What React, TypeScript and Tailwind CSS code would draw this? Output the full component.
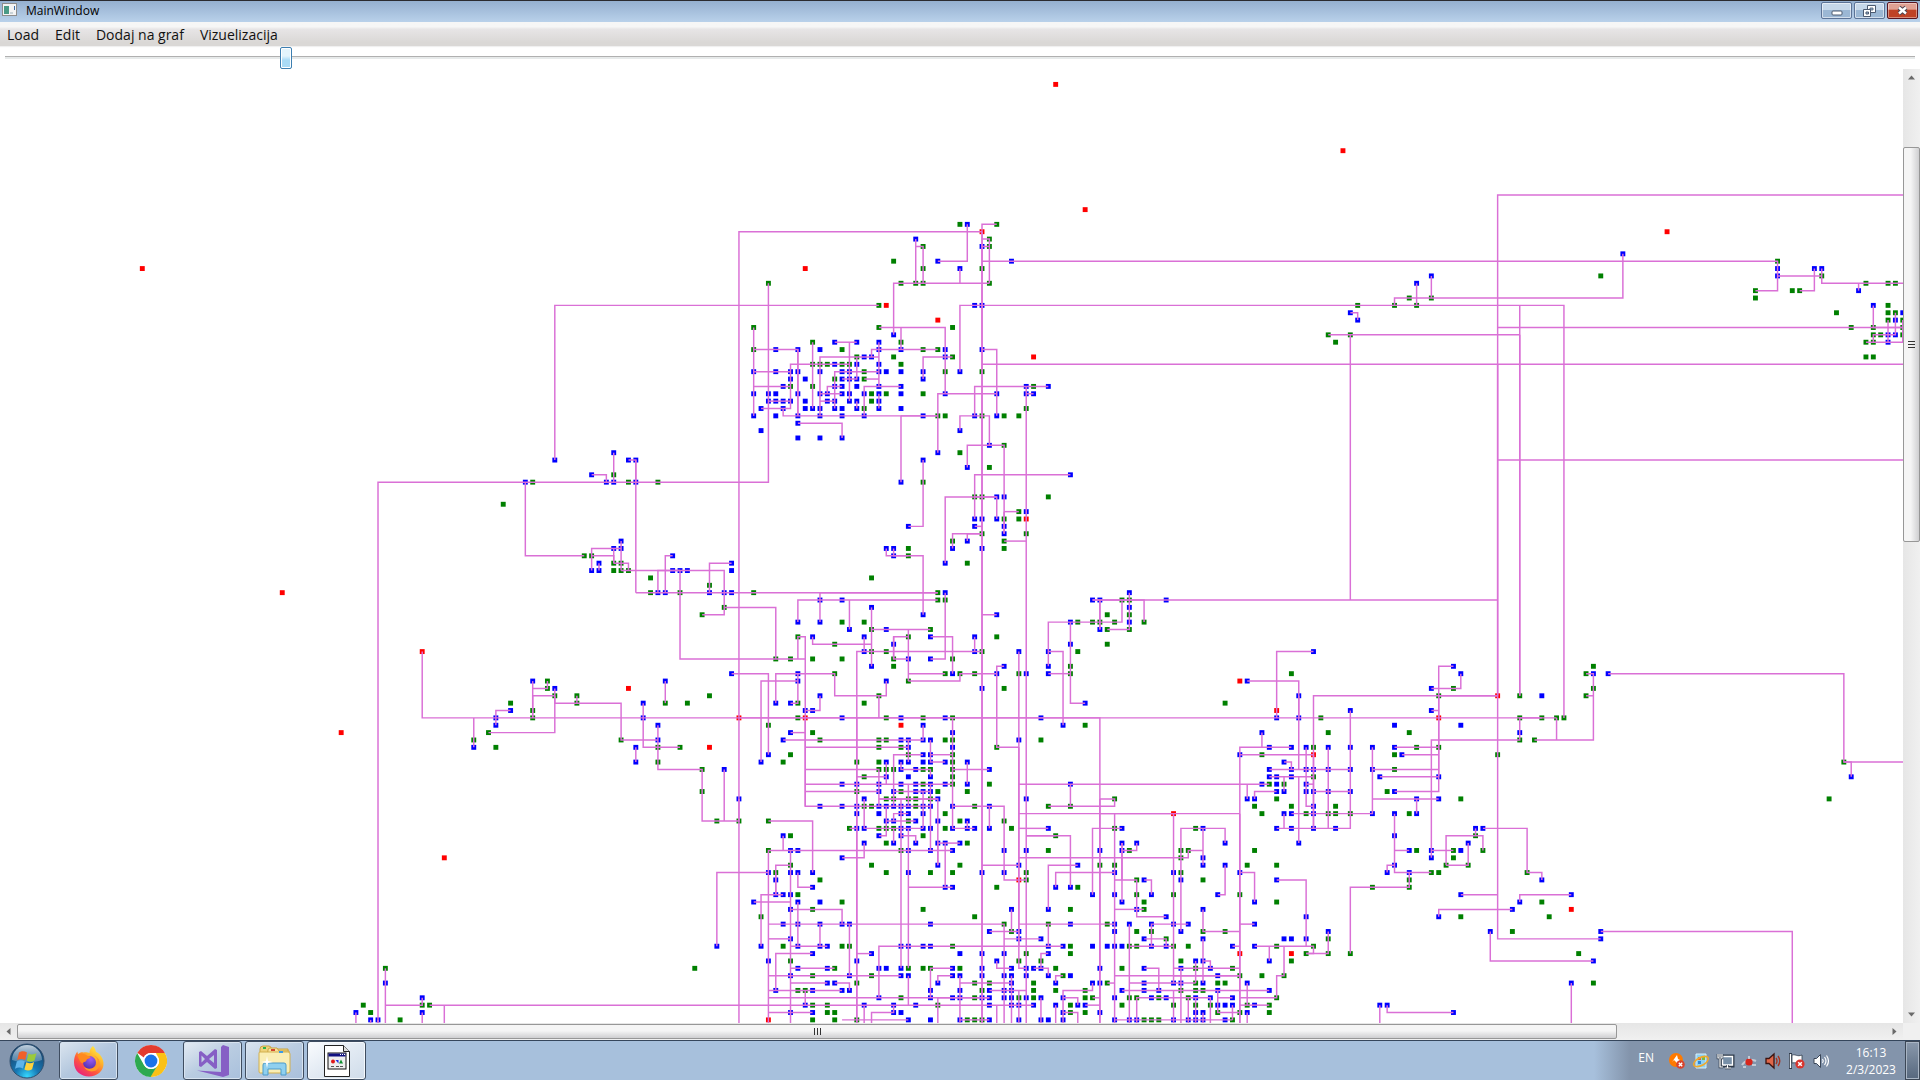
import React from "react";

/* ---------- network data: grid cells, b = switch, g = node, r = substation ---------- */

const NODE_ROWS = `
0 r124
9 r163
17 r128
19 g111 b112 g116
20 r114 r207
21 b105 g115
22 g106 b114 g115
23 b201
24 g102 b108 b118 g222
25 r0 r90 g106 b111 g114 b222 b227 b228
26 b175 g198 b222 g228
27 g85 g103 g105 g106 g115 b173 g234 g237 g238
28 g219 g224 g225 b233
29 g172 g175 g219
30 g100 r101 b113 b114 g165 g170 g173 b235 g237
31 b164 g230 g237 g238 b239
32 r108 b165 g237 b238 g239
33 g83 g100 g110 g232 g235 g239
34 b102 g161 g164 g235 g236 b237 b238 g239
35 g91 b94 b97 b100 g103 g162 g234 g235 b237
36 g83 b86 b89 b92 g95 b100 b103 g106 g108 b109 b114
37 g97 b98 b99 g102 b109 g110 r121 g234 g235
38 g91 g92 g93 b94 g95 g96 b97 b100 g103
39 b83 b86 b88 b89 b92 b95 b96 g98 b100 b101 b103 b106 g109 b111 g114
40 b88 b90 g94 b95 b96 b97 g98 b106
41 b87 g88 g91 b94 b95 b97 b100 b103 b120 g121 b123
42 b83 b85 b86 b89 b92 b93 b95 b96 b98 g99 b100 g101 b103 g106 b109 b116 b120 b121
43 b85 b86 b87 b88 b90 b93 b94 b96 b97 g99 b100
44 b84 b87 b90 b91 b92 b94 b95 b97 g98 b100 b103 g120
45 b83 b86 b89 b92 b95 b98 b106 g108 g109 b113 g114 b116 g117 g119
46 b89
47 b84 b111
48 b89 b92 b95
49 b115 g117
50 b64 b108 g111
51 b56 b66 b67 b106
52 b112 g115
53 b61 g64 b126
54 b52 g53 b63 b64 g66 b67 g70 b103 g106
56 g113 g114 b116 b117 g123
57 g49
58 g119 b120
59 b113 b114 b116 g117 g119 r120
60 b104 b113 b117
61 g114 b117 g120
62 b65 g110 b112 g117
63 b64 b65 b101 b102 g104 b110 b114 g117
64 g60 g61 b72 b102 g104
65 b62 g64 g65 b80 b109 g112
66 b61 b62 g64 g65 g66 b72 b73 b74 b80
67 g69 g99
68 g77
69 r19 g69 b70 b71 g73 b77 b79 b80 g83 g108 b109 b134
70 b92 b95 g108 g109 b129 b130 g133 g134 b139
71 g79 b99 b134
72 g76 b106 b116 g131 g134
73 b89 b92 g95 g98 b126 g127 g129 g130 g132 b134 g136
74 b96 g99 b101 g107 b130 g131 g134
75 g89 b91 b98 g104 b107 b113 g116
76 g94 b102 b126 g131
77 r38 b98 g99 g101 b113 g114 b119 b123 g127 b159
78 g86 g88 g91 g95 g102 b104 b107 g110
79 b99 g102 b117 b123 g126 b178 g197
80 b80 b89 g94 g109 b110 g111 g113 b116 g119 b120 b123 g126 g156 b179 g196 b197 b199
81 b53 g55 b71 b89 b101 g104 r149 b150
82 g55 b56 r66 b114 g117 b175 g178 g197
83 g56 g59 g77 b92 g100 b157 g176 r184 g187 b190 g196
84 g50 g59 b68 g71 g74 b86 b88 g89 g98 b128 g147
85 b50 g53 b90 b91 r154 b164 b175
86 b48 g53 b68 r81 g89 r90 b95 g101 b103 g106 b109 g110 b122 b154 b157 g160 r176 g187 g190 g192 g193
87 b48 b70 g85 r103 b106 b125 g128 b170 b179
88 r27 g47 b88 g91 b110 b152 g161 g172 b187
89 g45 g65 b70 b87 g92 g100 g101 b103 b104 b106 b107 g109 g110 b119 g122 g187 g189
90 b45 g48 b67 g70 g73 r77 g100 g103 b104 b110 g116 b153 b156 b158 g159 b161 b164 b167 b170 g173 g176
91 b85 g88 g104 b106 b107 g110 b149 g152 r159 g170 b171 g184
92 b67 g70 b84 g87 g97 g100 b101 b103 b104 b106 b107 b109 g110 b112 b155 g231
93 g76 b79 g100 g101 g102 b103 b105 g106 g107 g110 b115 b153 b156 b158 b159 b161 b164 b167 g170
94 g98 b101 b104 b107 g110 b153 b154 b156 g159 b168 b176 b232
95 b95 b97 b100 b103 b105 g106 b107 b109 g110 b112 g115 b126 b152 g153 b154 g155 b158
96 g76 g97 b100 b102 g103 b105 b106 b107 g108 g112 b154 b155 b158 b159 b161 b164 g169 b170
97 b81 b98 g101 g102 g104 g105 g107 b108 b120 g132 b150 b151 g154 b173 b176 g179 g229
98 b92 b95 b97 g98 g99 b100 b101 b102 b103 b104 g105 b106 b107 b110 g113 b115 g123 g126 g151 g156 b159 g162
99 b97 b100 b103 b104 b106 g109 r140 g152 b155 b156 g158 b159 g161 g162 g164 b167 b170 g172 b173
100 g78 g81 g85 b101 b102 g104 b105 b108 g111 b112 g117
101 g96 b97 b98 g100 g101 g102 b103 b104 b106 b107 g109 b110 b112 b113 b115 g118 b123 g132 b133 g143 b144 b154 b156 b159 b162 b181 b182
102 b87 g88 b100 b103 g106 g124 b170 g181
103 b98 g101 b102 b105 b108 b109 b111 g112 b133 b135 b147 b157 b180
104 g85 b88 b89 g103 b104 b107 b110 b117 b120 g123 b130 b133 g134 g141 g142 g151 b172 g173 b175 g178 b179 g182
105 r41 b95 g141 b144 b175 g178
106 g88 g99 b108 g111 b119 b127 g130 g132 b144 b147 g150 g154 b170 g177 g180
107 b85 g86 b88 b89 b91 g101 b104 g107 g110 b114 b117 g120 b132 b140 g141 b149 b169 b172 g175 g176 g188
108 b86 g92 r119 g120 g135 b136 b141 g144 b154 g172 b190
109 b91 b109 b110 g116 b124 b126 g127 g167 g172
110 b86 b87 b88 g89 b129 b132 g135 b137 g140 b146 g149 b179 b194
111 b83 b89 b92 g95 b133 g136 b151 g154 b187 g190
112 b88 g91 g106 b118 b123 g126 b135 g136 b144 b186 r194
113 g84 g113 b139 b158 b176 g179 g191
114 b87 b89 b92 b95 b96 b107 g117 g123 b126 g131 b132 b134 b137 b140 b142 b151
115 b115 g118 b119 b132 g135 g137 b141 g144 g147 b161 b183 g186 b198
116 b88 b119 b122 b136 g139 b144 b155 b156 b158 g161 b198
117 b78 b84 g87 b89 b92 b93 g95 g96 b103 b104 b106 b107 g110 b123 b125 g126 b129 b131 b132 b133 g134 g135 b137 b139 g140 g142 b148 b151 g154 g159
118 b91 b99 b111 b114 b117 g120 b123 g126 r149 r156 g158 g161 g164 g195
119 b85 g88 b97 b116 g119 g122 g141 b143 b144 b153 g156 b197
120 g33 g75 b89 b93 g94 b100 b101 b103 g104 g106 g107 b110 g111 b114 b118 b120 b121 b122 g124 b130 g133 b136 b141 g143 b145 g148
121 b88 g91 b96 g99 b103 b104 b110 b111 b114 b117 b118 b120 b123 g125 b126 b146 g149 g152 g155
122 b33 b93 b94 g97 b108 g113 g115 b118 g121 b124 b129 b130 g131 b136 b140 b141 g143 b144 g146 g147 b150 b194 g197
123 b86 g89 g90 b91 b95 b96 b107 b111 g114 b115 b117 b118 g121 g124 g128 b133 b136 b138 g141 g143 g144 b146 b153
124 b38 b100 g103 b107 b110 b111 g113 b114 b115 b117 b118 g119 b120 g121 b122 b125 g128 g129 b132 g134 g135 b137 g138 b139 g142 b143 b145 b148 g154
125 g30 g38 g39 b90 g91 g93 b98 b102 b105 g108 b115 b118 b119 b121 b124 g126 b127 b128 g133 g140 g143 g145 b146 b147 b148 g150 b151 g153 b168 b169
126 b29 g31 b38 b88 b91 g93 g94 b102 b103 b125 g126 g128 b130 b143 b144 g146 g149 b150 g153 b178
127 b31 b32 g35 r85 g91 g94 g97 b104 b107 b111 g112 g113 g114 b115 b119 b122 b123 b125 b132 b134 b135 g136 g137 g138 b140 b142 b143 b144 b147 g148
`;

/* Each line is a polyline through "column,row" cells. */
const LINES = `
81,128 81,20 114,20|114,20 114,128|114,20 114,128|116,19 114,19 114,20|114,21 115,21 115,27|114,22 115,22
105,21 105,27|105,22 106,22 106,27|102,34 102,27 115,27|111,25 111,27|108,24 112,24 112,19|114,24 222,24 222,28 219,28
85,27 85,54 32,54 32,128|56,51 56,30 100,30|111,39 111,30 193,30 193,86|100,33 109,33 109,42|103,33 103,36
83,33 83,45|83,36 89,36 89,45|89,36 89,45|83,39 88,39|83,41 88,41|96,38 88,38 88,44 84,44|85,43 88,43
91,35 91,44|94,35 97,35|96,35 96,43|100,37 92,37 92,45|92,43 94,43|97,37 97,40 95,40|97,43 97,44
99,37 99,36 108,36|100,35 100,41|100,42 100,44|100,39 94,39 94,44|98,40 100,40|92,42 95,42|93,42 93,41 95,41
98,45 98,41 103,41|87,44 87,45 108,45|103,45 103,54|103,45 108,45|89,46 95,46 95,48|106,40 106,37 110,37
108,50 108,42 116,42|114,36 116,36 116,45|114,38 240,38|113,45 113,41 123,41|120,41 120,128|120,42 121,42
111,47 111,45 115,45 115,49|112,52 112,49 117,49 117,61|126,53 113,53 113,59|106,51 106,60 104,60
240,15 184,15 184,116 198,116|184,38 184,83|201,23 201,29 170,29 170,30|175,26 175,29|173,27 173,30|187,30 187,83|187,34 187,83
164,31 165,31 165,32|161,34 187,34|184,33 240,33|225,28 227,28 227,25|222,26 228,26|228,25 228,27 240,27|233,27 233,28
235,30 235,33 239,33|237,32 237,35|238,31 238,34 235,34 235,35|234,35 239,35 239,32|164,34 164,70|184,51 240,51
109,65 109,56 116,56 116,59|113,56 116,56|113,60 114,60|117,58 119,58|117,58 117,61|110,63 110,61 114,61|112,62 112,61 114,61
117,62 120,62|101,63 101,64 106,64 106,72|102,63 102,64 104,64|67,69 108,69|89,73 89,70 108,70|92,73 92,69 108,69
96,74 96,70|109,69 109,78 107,78|99,71 99,79|99,74 107,74|104,74 104,81|102,78 102,75 104,75|102,75 102,78 104,78
89,78 89,75 90,75 90,98|91,75 91,76 99,76|98,75 98,77|97,128 97,77 114,77|97,86 97,128|107,75 110,75 110,80|113,75 113,77
114,72 116,72|104,80 109,80|104,81 111,81 111,80 116,80|116,80 116,79 117,79|116,80 116,90 119,90|86,84 86,80 94,80 94,83 101,83 101,81
84,92 84,81 89,81|89,80 89,84 88,84|100,83 100,86|90,85 92,85 92,83|119,77 119,120 120,120|119,90 119,117
123,79 123,73 133,73 133,70|126,73 126,84 128,84|123,77 125,77 125,87|123,80 126,80|129,70 184,70|130,70 130,74|130,70 130,74
134,69 134,74 131,74|129,70 136,70 136,73|52,54 52,64 60,64|61,53 63,53 63,54|64,50 64,54|66,51 67,51 67,69|67,51 67,54
61,66 61,63 65,63|61,64 64,64 64,65|65,62 65,66|64,63 64,65|64,65 66,65 66,66|62,65 62,66|65,66 79,66 79,72 76,72
70,69 70,66 73,66|71,69 71,64 72,64|73,66 73,78 90,78|77,69 77,65 80,65|79,71 86,71 86,78|53,81 53,86|53,82 55,82 55,81
56,82 56,88 47,88|53,86 53,83 56,83|56,83 56,84 65,84 65,89 70,89|59,83 59,84|48,87 48,85 50,85|45,90 45,86|38,77 38,86 192,86
81,86 130,86 130,128|68,84 68,90 73,90|70,87 70,93 76,93 76,100 81,100 81,97|79,93 79,100|71,81 71,84|67,90 67,92|80,80 85,80 85,91
85,100 91,100 91,107|33,120 33,128|33,125 38,125 38,124|39,125 121,125|41,125 41,128|38,126 38,128|29,126 29,128|31,127 31,128|32,127 32,128
78,117 78,107 85,107|90,86 90,98 107,98|88,88 90,88|87,89 106,89 106,87|90,90 104,90|104,89 104,92|102,98 102,91 106,91
107,89 107,92 109,92|107,91 110,91|110,86 110,95|90,93 100,93 100,98|97,94 101,94|101,92 101,95|103,92 103,93 107,93 107,94
110,93 115,93|112,92 112,95|90,95 110,95|90,96 100,96|102,96 107,96|100,97 108,97 108,106|100,97 108,97|107,95 107,104
106,96 106,101|104,95 104,98|105,96 106,96|103,97 103,120|98,97 98,101 106,101|102,100 102,99 104,99|101,100 105,100|101,98 101,102 100,102
96,101 97,101|102,101 102,103|103,102 105,102 105,103|103,101 103,102|104,101 104,120|110,95 110,101 113,101|112,100 112,101
110,98 117,98 117,108 120,108|115,98 115,101|108,103 111,103|108,103 108,106|109,103 109,109|104,109 110,109|110,104 85,104 85,128|87,102 87,104|88,104 88,128
98,103 98,105 95,105|86,110 86,106 88,106|86,107 86,110|84,117 84,110 87,110|89,107 89,109 91,109|83,111 88,111|88,112 95,112 95,114
85,114 117,114 117,128|89,111 89,117|92,114 92,117|88,117 93,117|85,116 88,116|96,114 96,121|86,123 86,118 91,118|97,118 99,118
88,120 94,120|85,121 103,121|88,122 93,122|94,122 96,122 96,123|85,123 95,123|90,123 90,125|85,124 115,124|108,128 108,124 115,124|85,126 91,126
100,124 100,117 125,117|104,121 104,125|99,128 99,126 102,126 102,125|98,125 98,128|95,127 104,127|107,124 107,120 110,120
108,122 108,121 110,121|111,121 111,128|111,122 118,122|114,106 119,106|115,115 119,115|118,112 118,115|117,116 122,116|116,119 116,120 118,120
118,121 118,128|115,123 120,123|116,125 116,128|119,95 153,95|119,99 149,99|130,99 140,99|119,101 123,101|120,102 126,102 126,109|120,102 124,102
119,105 142,105 142,104 144,104|119,114 132,114|119,123 119,128|111,127 115,127|130,97 132,97 132,98 123,98|126,95 126,98|130,97 130,128
129,110 129,101 133,101|132,99 132,128|133,103 133,111|133,103 133,108|133,104 135,104 135,103|123,112 123,106 127,106|124,109 124,107 132,107
132,108 135,108 135,113 139,113|136,108 137,108 137,110|132,112 136,112|140,99 140,122|141,115 141,101 147,101 147,103|144,101 144,106
146,110 147,110 147,106|149,128 149,90 156,90|149,91 159,91|149,99 149,128|152,88 152,90|149,107 151,107 151,111|144,112 144,115 149,115
144,116 144,122|134,114 134,128|137,117 137,114 142,114|136,116 139,116 139,117|134,117 140,117|148,117 149,117|149,114 151,114
123,114 123,117|122,120 122,118 123,118|121,120 123,120 123,121|124,122 124,121 125,121|136,120 138,120 138,123|140,120 149,120
143,122 143,119|144,119 145,119 145,120|132,121 149,121|140,121 149,121|134,122 143,122|133,123 153,123|135,128 135,124 145,124 145,128
140,123 140,128|141,120 141,128|131,122 132,122|125,128 125,123 129,123 129,122|125,124 127,124 127,125|124,125 124,128|122,124 122,128
128,125 130,125|129,124 130,124|125,126 127,126 127,128|142,124 142,128|143,124 143,128|144,126 144,128|146,123 146,126 149,126
146,124 148,124|148,125 148,127|132,127 148,127|150,122 150,125|149,125 153,125|149,124 154,124 154,121 155,121 155,117|150,126 150,128
151,117 159,117 159,118 158,118|153,117 153,119|154,108 158,108 158,117|154,86 154,77 159,77|150,81 157,81 157,93|157,83 157,86
159,101 159,83 184,83|176,83 184,83|159,91 159,101|175,82 179,82 179,80|178,79 176,79 176,96 170,96|176,83 176,94|175,85 176,85|164,85 164,101 154,101
161,90 161,101|158,90 158,98 159,98|158,95 159,95|153,93 164,93|153,94 159,94|157,94 157,103|155,94 155,96|156,93 156,92 155,92
150,95 150,97|151,97 151,96 154,96|159,96 164,96|156,99 167,99 167,90|155,99 155,101|167,93 176,93|168,94 176,94|170,90 176,90
171,91 176,91|167,97 176,97|173,97 173,99|175,105 175,89 187,89 187,86|187,86 190,86|189,89 197,89 197,80 196,80|192,86 192,89|196,83 197,83
170,99 170,107 175,107|170,104 172,104|169,107 169,106 170,106|172,107 172,109 164,109 164,118|175,104 178,104|177,106 177,102 182,102 182,104
181,101 181,102|177,106 180,106 180,103|182,101 188,101 188,107 190,107 190,108|179,110 184,110|187,111 187,110 194,110
176,113 176,112 186,112|183,115 183,119 197,119|198,115 224,115 224,128|158,118 161,118 161,115|194,122 194,128|168,125 168,128
169,125 169,126 178,126|199,80 231,80 231,92 240,92|231,92 232,92 232,94
`;

const STEP = 7.366;
const SIZE = 4.9;
const cx = (c: number) => 142.3 + c * STEP;
const cy = (r: number) => 15.4 + r * STEP;

const FILL: Record<string, string> = { b: "#0000ff", g: "#008000", r: "#ff0000" };

const nodes = NODE_ROWS.trim()
  .split("\n")
  .flatMap((line) => {
    const [row, ...cells] = line.split(" ");
    return cells.map((cell) => ({ row: Number(row), col: Number(cell.slice(1)), kind: cell[0] }));
  });

const lines = LINES.trim()
  .split(/[|\n]/)
  .map((line) =>
    line
      .split(" ")
      .map((p) => {
        const [c, r] = p.split(",").map(Number);
        return `${cx(c).toFixed(2)},${cy(r).toFixed(2)}`;
      })
      .join(" ")
  );

function NetworkCanvas() {
  return (
    <svg className="block h-full w-full" role="img" aria-label="Network graph">
      {nodes.map((n, i) => (
        <rect key={i} x={cx(n.col) - SIZE / 2} y={cy(n.row) - SIZE / 2} width={SIZE} height={SIZE} fill={FILL[n.kind]} />
      ))}
      <g fill="none" stroke="#da70d6" strokeWidth="1.47">
        {lines.map((points, i) => (
          <polyline key={i} points={points} />
        ))}
      </g>
    </svg>
  );
}

/* ---------- window chrome ---------- */

const captionButton =
  "flex h-[17px] w-[31px] items-center justify-center rounded-[2px] border border-[#5c7396] bg-linear-to-b from-[#c6d8ea] from-45% to-[#9bb7d4] to-50% shadow-[inset_0_0_0_1px_rgba(255,255,255,0.55)]";

function TitleBar() {
  return (
    <header className="flex h-[22px] items-start border-t border-[#2b2b30] bg-linear-to-b from-[#95b0d0] to-[#b9d1ea] pr-[2px] pl-[2px]">
      <svg width="15" height="13" viewBox="0 0 15 13" className="mt-[2px]" aria-hidden="true">
        <rect x="0.5" y="0.5" width="14" height="12" fill="#f4f4f4" stroke="#8d8d8d" />
        <rect x="2" y="3" width="5" height="8" fill="#4a9a86" />
        <path d="M8 9h3v2H8z" fill="#c9d3d8" />
        <path d="M12 3h1v4h-1z" fill="#3f6fa8" />
      </svg>
      <h1 className="ml-[9px] font-['Open_Sans',sans-serif] text-[12px] leading-[20px] text-black">MainWindow</h1>
      <div className="mt-px ml-auto flex gap-[2px]">
        <button type="button" aria-label="Minimize" className={captionButton}>
          <svg width="12" height="6" viewBox="0 0 12 6" className="mt-[4px]">
            <rect x="1" y="1" width="10" height="4" rx="1" fill="#fff" stroke="#4c5a70" />
          </svg>
        </button>
        <button type="button" aria-label="Restore" className={captionButton}>
          <svg width="13" height="12" viewBox="0 0 13 12">
            <path d="M4.5.5h8v7h-8z" fill="#fff" stroke="#4c5a70" />
            <path d="M7 3h3v2H7z" fill="#9bb7d4" stroke="#4c5a70" strokeWidth=".8" />
            <path d="M.5 4.500h7v7h-7z" fill="#fff" stroke="#4c5a70" />
            <path d="M3 7h2.500v2H3z" fill="#9bb7d4" stroke="#4c5a70" />
          </svg>
        </button>
        <button
          type="button"
          aria-label="Close"
          className="flex h-[17px] w-[31px] items-center justify-center rounded-[2px] border border-[#5a1520] bg-linear-to-b from-[#e0a193] from-40% to-[#bf4226] to-50% shadow-[inset_0_0_0_1px_rgba(255,255,255,0.4)]"
        >
          <svg width="13" height="11" viewBox="0 0 13 11">
            <path d="M3 2.500 10 8.500M10 2.500 3 8.500" stroke="#4c4450" strokeWidth="4.400" />
            <path d="M3 2.500 10 8.500M10 2.500 3 8.500" stroke="#fff" strokeWidth="2.400" />
          </svg>
        </button>
      </div>
    </header>
  );
}

function MenuBar() {
  return (
    <nav className="flex h-6 items-center gap-4 bg-linear-to-b from-[#f6f6f6] from-20% via-[#e7e5e6] via-30% to-[#dad8d6] to-85% px-[7px] pt-[2px] font-['Open_Sans',sans-serif] text-[14px] leading-[22px] text-[#111] shadow-[0_1px_1px_#f0f0f0]">
      {["Load", "Edit", "Dodaj na graf", "Vizuelizacija"].map((label) => (
        <button key={label} type="button">
          {label}
        </button>
      ))}
    </nav>
  );
}

function ZoomSlider() {
  return (
    <div className="flex h-[23px] items-start px-[5px]">
      <input
        type="range"
        aria-label="Zoom"
        min={0}
        max={1000}
        defaultValue={145}
        className="block h-[22px] w-full appearance-none bg-transparent [&::-webkit-slider-runnable-track]:h-[3px] [&::-webkit-slider-runnable-track]:border-t [&::-webkit-slider-runnable-track]:border-[#b0b0b0] [&::-webkit-slider-runnable-track]:bg-[#e7eaea] [&::-webkit-slider-thumb]:-mt-[10px] [&::-webkit-slider-thumb]:h-[22px] [&::-webkit-slider-thumb]:w-3 [&::-webkit-slider-thumb]:appearance-none [&::-webkit-slider-thumb]:rounded-[2px] [&::-webkit-slider-thumb]:border [&::-webkit-slider-thumb]:border-[#3c7fb1] [&::-webkit-slider-thumb]:bg-linear-to-b [&::-webkit-slider-thumb]:from-[#e3f4fc] [&::-webkit-slider-thumb]:from-40% [&::-webkit-slider-thumb]:to-[#a9dbf6] [&::-webkit-slider-thumb]:to-60% [&::-webkit-slider-thumb]:shadow-[inset_0_0_0_1px_#fff]"
      />
    </div>
  );
}

function Arrow({ d, label }: { d: string; label: string }) {
  return (
    <button type="button" aria-label={label} className="flex size-[17px] shrink-0 items-center justify-center">
      <svg width="7" height="7" viewBox="0 0 7 7">
        <path d={d} fill="#6a6a6a" />
      </svg>
    </button>
  );
}

function VerticalScrollbar() {
  return (
    <div className="flex w-[17px] shrink-0 flex-col bg-linear-to-r from-[#e6e6e6] to-[#f0f0f0]">
      <Arrow label="Scroll up" d="M0 5.500 3.500 1.500 7 5.500z" />
      <div className="flex min-h-0 grow flex-col">
        <div className="grow-[61] basis-0" />
        <div className="flex grow-[395] basis-0 flex-col items-center justify-center gap-[2px] rounded-[2px] border border-[#979797] bg-linear-to-r from-[#f5f5f5] from-45% to-[#cfcfd1]">
          <span className="h-px w-[7px] bg-[#333]" />
          <span className="h-px w-[7px] bg-[#333]" />
          <span className="h-px w-[7px] bg-[#333]" />
        </div>
        <div className="grow-[466] basis-0" />
      </div>
      <Arrow label="Scroll down" d="M0 1.500 3.500 5.500 7 1.500z" />
    </div>
  );
}

function HorizontalScrollbar() {
  return (
    <div className="flex h-[17px] shrink-0 bg-linear-to-b from-[#e6e6e6] to-[#f0f0f0]">
      <Arrow label="Scroll left" d="M5.500 0 1.500 3.500 5.500 7z" />
      <div className="flex grow py-px">
        <div className="flex grow-[1600] basis-0 items-center justify-center gap-[2px] rounded-[2px] border border-[#979797] bg-linear-to-b from-[#f5f5f5] from-45% to-[#cfcfd1]">
          <span className="h-[7px] w-px bg-[#333]" />
          <span className="h-[7px] w-px bg-[#333]" />
          <span className="h-[7px] w-px bg-[#333]" />
        </div>
        <div className="grow-[269] basis-0" />
      </div>
      <Arrow label="Scroll right" d="M1.500 0 5.500 3.500 1.500 7z" />
      <div className="w-[17px] bg-[#f0f0f0]" />
    </div>
  );
}

/* ---------- taskbar ---------- */

function StartOrb() {
  return (
    <svg width="36" height="36" viewBox="0 0 36 36">
      <defs>
        <radialGradient id="orb" cx=".5" cy=".95" r=".85">
          <stop offset="0" stopColor="#35d8ff" />
          <stop offset=".4" stopColor="#1778b4" />
          <stop offset="1" stopColor="#17436c" />
        </radialGradient>
        <linearGradient id="orbGloss" x1="0" y1="0" x2="0" y2="1">
          <stop offset="0" stopColor="#dfe9f2" stopOpacity=".85" />
          <stop offset="1" stopColor="#8fb0c9" stopOpacity=".45" />
        </linearGradient>
      </defs>
      <circle cx="18" cy="18" r="17" fill="url(#orb)" stroke="#31506f" />
      <path d="M3 17a15 15 0 0 1 30 0c-8 3-22 3-30 0z" fill="url(#orbGloss)" />
      <path d="M10 9.500c3-2 5.500-1.500 8 0l-1.800 7.500c-2.800-1.500-5-1.500-8 0z" fill="#f0602a" />
      <path d="M19.500 10.500c2.500 1.300 5 1.300 8-.5l-2 7.500c-2.800 1.800-5.300 1.500-7.800.300z" fill="#9aca3c" />
      <path d="M7.800 18.500c3-1.700 5.300-1.500 8 0L14 25.500c-2.700-1.500-5-1.300-8 .2z" fill="#5fb4ea" />
      <path d="M17.300 19.300c2.500 1.300 5 1.300 7.800-.3l-2 7.200c-2.800 1.700-5.200 1.500-7.700.3z" fill="#ffd23c" />
    </svg>
  );
}

function FirefoxIcon() {
  return (
    <svg width="32" height="32" viewBox="0 0 32 32">
      <defs>
        <linearGradient id="fox" x1=".85" y1=".05" x2=".2" y2=".95">
          <stop offset="0" stopColor="#fff14a" />
          <stop offset=".35" stopColor="#ffb02a" />
          <stop offset=".65" stopColor="#ff5a3a" />
          <stop offset="1" stopColor="#e8207e" />
        </linearGradient>
        <radialGradient id="globe" cx=".6" cy=".25" r=".8">
          <stop offset="0" stopColor="#a05cf0" />
          <stop offset="1" stopColor="#4b2fb0" />
        </radialGradient>
      </defs>
      <path d="M20 1c2 2 2.500 4 3 6 3 1 7 5 7.500 11C31 26 24 31.500 16 31.500S1 26 1 17.500C1 12 3 8 4.500 6.500c0 1.500.3 2 .8 2.600C7 7.500 8.500 7 10.500 7.500c2-.3 4-.5 6 .5C16.500 5 18 2.500 20 1z" fill="url(#fox)" />
      <circle cx="16.500" cy="17.500" r="6.500" fill="url(#globe)" />
      <path d="M4.500 10c3-2 7-1.500 10 1 1.500 0 3 .5 3 1.300 0 1.200-3 1.400-3.700 2.300-.5 2.500-3 2.400-3.800 3.400C8 19 6 15 4.500 10z" fill="#ff8a1e" />
      <path d="M19 10c5 1 7 6 4.500 10-2.500 4-8 5-12.500 2 2 4 8 6 12.500 3 5.500-4 4.500-13-4.500-15z" fill="#ff9a28" />
    </svg>
  );
}

function ChromeIcon() {
  return (
    <svg width="32" height="32" viewBox="0 0 32 32">
      <circle cx="16" cy="16" r="16" fill="#fff" />
      <path d="M16 0a16 16 0 0 1 13.860 8H16a8 8 0 0 0-7.200 4.500L2.300 7.800A16 16 0 0 1 16 0z" fill="#e33b2e" />
      <path d="M29.860 8A16 16 0 0 1 16 32l-1-.1L22.930 20A8 8 0 0 0 22.200 11L21 8z" fill="#fbc116" />
      <path d="M2.140 8A16 16 0 0 0 15.500 32L22.900 20A8 8 0 0 1 9 20z" fill="#2da94f" />
      <circle cx="16" cy="16" r="8" fill="#fff" />
      <circle cx="16" cy="16" r="6.400" fill="#1a73e8" />
    </svg>
  );
}

function VisualStudioIcon() {
  return (
    <svg width="32" height="32" viewBox="0 0 32 32" fill="#865fc5">
      <path d="m24 2 2-2 6 2v28l-6 2L0 25.500l24 1.500z" />
      <path fillRule="evenodd" d="m2 7 2-1 6 5 8-7 2 1v18l-2 1-8-7-6 5-2-1zM4.500 10.500v7L8 14zM17 10l-5 4 5 4z" />
    </svg>
  );
}

function FolderIcon() {
  return (
    <svg width="33" height="31" viewBox="0 0 33 31">
      <path d="M2 4q0-3 3-3h6q2 0 2.500 3H30v20H2z" fill="#efd27a" stroke="#c9a443" />
      <path d="M10 5q0-2 2-2h7l2 3h10v16H8z" fill="#f7e29b" stroke="#c9a443" />
      <path d="M1 8q0-1 1-1h28q2 0 2 2v17q0 2-2 2H2q-1 0-1-2z" fill="#faeeb4" stroke="#d2b04f" />
      <path d="M5 2h3v2H5z" fill="#2eb14a" />
      <path d="M13 4h4v2h-4z" fill="#d4452c" />
      <path d="M21 6h4v2h-4z" fill="#3a9be8" />
      <path d="M5 30V20q0-2 2-2h19q2 0 2 2v10h-5v-6H10v6z" fill="#8fd0ef" stroke="#4c9bcb" />
      <path d="m9 11 1 5 5 1-5 1-1 5-1-5-5-1 5-1z" fill="#fff" />
    </svg>
  );
}

function AppIcon() {
  return (
    <svg width="26" height="32" viewBox="0 0 26 32">
      <path d="M.5.500h19l6 6v25H.5z" fill="#fff" stroke="#222" />
      <path d="M19.500.500v6h6" fill="#ddd" stroke="#222" />
      <rect x="4" y="8" width="18" height="16" fill="#eee" stroke="#111" />
      <path d="M4.500 8.500h17v3h-17z" fill="#101080" />
      <path d="M16 9h1v1h-1zM18 9h1v1h-1zM20 9h1v1h-1z" fill="#fff" />
      <circle cx="9" cy="16.500" r="2" fill="#e01818" />
      <path d="m11.500 15 3 3.500V15z" fill="#2030e0" />
      <path d="m15 18.500 2-4 2 4z" fill="#109030" />
      <path d="M7 21.500h3M12 21.500h3M16 21.500h3" stroke="#555" />
    </svg>
  );
}

const TASKS = [
  { label: "Firefox", icon: <FirefoxIcon />, style: "border-[#3f4d60] bg-linear-to-br from-[#dbe5ef] via-[#b3c7de] to-[#a6bedb] shadow-[inset_0_0_0_1px_#d7e3f0]" },
  { label: "Chrome", icon: <ChromeIcon />, style: "border-transparent" },
  { label: "Visual Studio", icon: <VisualStudioIcon />, style: "border-[#3f4d60] bg-linear-to-br from-[#e4ebf3] via-[#b9cce1] to-[#a9c0dc] shadow-[inset_0_0_0_1px_#d7e3f0]" },
  { label: "File Explorer", icon: <FolderIcon />, style: "border-[#3f4d60] bg-linear-to-br from-[#dbe5ef] via-[#b9cbe0] to-[#a9c0dc] shadow-[inset_0_0_0_1px_#d7e3f0]" },
  { label: "MainWindow", icon: <AppIcon />, style: "border-[#3f4d60] bg-linear-to-br from-[#fafcfe] via-[#e2eaf3] to-[#cfdcea] shadow-[inset_0_0_0_1px_#f4f8fc]" },
];

const TRAY = [
  {
    label: "Avast",
    art: (
      <>
        <circle cx="7" cy="7" r="7" fill="#ff7a00" />
        <path d="M3 9 8 2l1 4 2 1-3 3-3-3z" fill="#fff" />
        <circle cx="11.500" cy="11.500" r="4.300" fill="#d8432e" />
        <path d="m9.800 9.800 3.400 3.400m0-3.400-3.400 3.400" stroke="#fff" strokeWidth="1.400" />
      </>
    ),
  },
  {
    label: "Windows Update",
    art: (
      <>
        <path d="M3 1h10v14H3z" fill="#8ed0f2" stroke="#d6f0fc" />
        <path d="M5 4h3v3H5z" fill="#e2622f" />
        <path d="M9 4h3v3H9z" fill="#7db93c" />
        <path d="M5 8h3v3H5z" fill="#2f86d6" />
        <ellipse cx="8" cy="8.500" rx="8" ry="4" fill="none" stroke="#f0a92b" strokeWidth="1.600" transform="rotate(-28 8 8.500)" />
      </>
    ),
  },
  {
    label: "Network",
    art: (
      <>
        <path d="M5 3h11v10H5z" fill="#7890a8" stroke="#2e3a4a" strokeWidth="3" />
        <path d="M5.500 3.500h10v8.500h-10z" fill="#7890a8" stroke="#fff" strokeWidth="1.400" />
        <path d="M8 15h6M10.500 12v3M3 6v8h3M1 1v4h4V1M3 1v3" fill="none" stroke="#2e3a4a" strokeWidth="2.600" />
        <path d="M8 15h6M10.500 12v3M3 6v8h3M1 1v4h4V1M3 1v3" fill="none" stroke="#fff" strokeWidth="1.200" />
      </>
    ),
  },
  {
    label: "Device",
    art: (
      <>
        <path d="M1 12c3-5 10-6 14-4" fill="none" stroke="#c3cad4" strokeWidth="2" />
        <circle cx="8" cy="9" r="3.600" fill="#d8261c" />
        <path d="M8 6V3M2 14h3M11 12h4" stroke="#d5dbe3" strokeWidth="1.500" />
      </>
    ),
  },
  {
    label: "Audio manager",
    art: (
      <>
        <path d="M1 5.500h3L9 1v14l-5-4.500H1z" fill="#e0674a" stroke="#3c1410" strokeWidth="1.300" />
        <path d="M11 5q2 3 0 6M13 3q3.500 5 0 10" fill="none" stroke="#a83420" strokeWidth="1.400" />
      </>
    ),
  },
  {
    label: "Action Center",
    art: (
      <>
        <path d="M1.500 0v16" stroke="#2e3a4a" strokeWidth="3" />
        <path d="M1.500 1v14" stroke="#fff" strokeWidth="1.400" />
        <path d="M3 2c4-1 5 2 10 0v8c-5 1-6-1-10 0z" fill="#fff" stroke="#2e3a4a" strokeWidth=".8" />
        <circle cx="11" cy="11" r="4.600" fill="#d8352e" />
        <path d="m9.200 9.200 3.600 3.600m0-3.600-3.600 3.600" stroke="#fff" strokeWidth="1.500" />
      </>
    ),
  },
  {
    label: "Volume",
    art: (
      <>
        <path d="M1 5.500h2.500L7.500 1.500v13l-4-4H1z" fill="#fff" stroke="#3a4658" strokeWidth="1" />
        <path d="M9.500 6q1.500 2 0 4M11.500 4q3 4 0 8M13.500 2.500q4 5.500 0 11" fill="none" stroke="#fff" strokeWidth="1.200" />
      </>
    ),
  },
];

function Taskbar() {
  return (
    <footer className="flex h-10 shrink-0 border-t border-[#35465c] bg-[#a7c0dc] font-['Open_Sans',sans-serif]">
      <div className="flex w-[59px] items-center justify-center bg-[#8496ae] pr-[5px]">
        <button type="button" aria-label="Start">
          <StartOrb />
        </button>
      </div>
      <div className="flex grow gap-[3px]">
        {TASKS.map((task) => (
          <button
            key={task.label}
            type="button"
            aria-label={task.label}
            className={`flex w-[59px] items-center justify-center rounded-[3px] border ${task.style}`}
          >
            {task.icon}
          </button>
        ))}
      </div>
      <div className="flex bg-linear-to-r from-[#a7c0dc] to-[#8394ab] to-[36px] pl-[44px] text-white">
        <span className="mt-[8px] text-[12px] leading-[18px]">EN</span>
        <div className="ml-[15px] flex items-center gap-[8px]">
          {TRAY.map((item) => (
            <button key={item.label} type="button" aria-label={item.label}>
              <svg width="16" height="16" viewBox="0 0 16 16" overflow="visible">
                {item.art}
              </svg>
            </button>
          ))}
        </div>
        <div className="ml-[11px] flex w-[62px] flex-col items-center justify-center text-[12px] leading-[17px]">
          <time>16:13</time>
          <time>2/3/2023</time>
        </div>
        <button
          type="button"
          aria-label="Show desktop"
          className="ml-[3px] w-[15px] border border-[#3c4756] bg-linear-to-b from-[#8a99ac] to-[#57687e] shadow-[inset_0_0_0_1px_#a9b5c4]"
        />
      </div>
    </footer>
  );
}

export default function App() {
  return (
    <div className="flex h-screen flex-col overflow-hidden bg-white">
      <TitleBar />
      <MenuBar />
      <ZoomSlider />
      <main className="flex min-h-0 grow">
        <div className="min-w-0 grow overflow-hidden">
          <NetworkCanvas />
        </div>
        <VerticalScrollbar />
      </main>
      <HorizontalScrollbar />
      <Taskbar />
    </div>
  );
}
